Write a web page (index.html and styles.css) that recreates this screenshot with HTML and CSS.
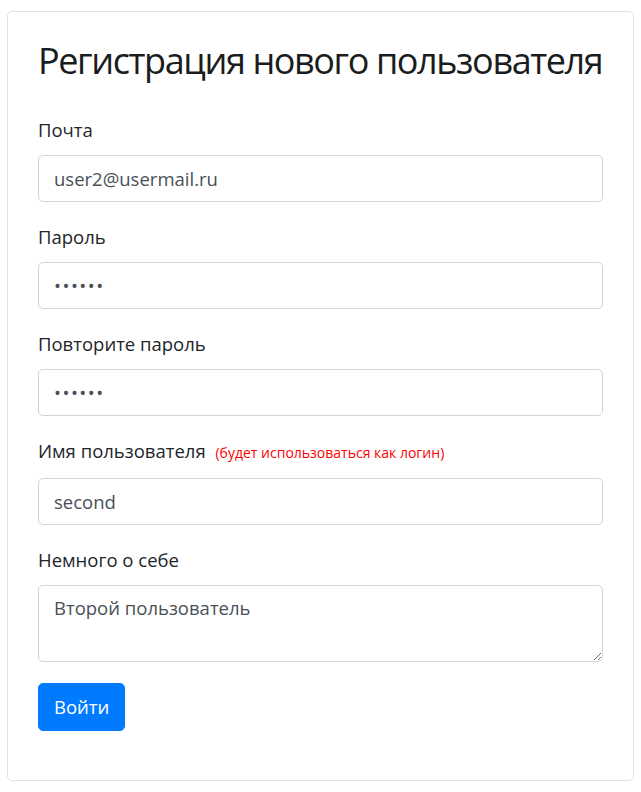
FILE: index.html
```html
<!DOCTYPE html>
<html lang="ru">
<head>
<meta charset="utf-8">
<title>Регистрация</title>
<link rel="stylesheet" href="styles.css">
</head>
<body>
<div class="card">
  <h2 class="title">Регистрация нового пользователя</h2>
  <form class="form">
    <div class="group">
      <label class="label" for="email">Почта</label>
      <input class="control" id="email" type="text" value="user2@usermail.ru">
    </div>
    <div class="group">
      <label class="label" for="pass">Пароль</label>
      <input class="control secret" id="pass" type="password" value="123456">
    </div>
    <div class="group">
      <label class="label" for="pass2">Повторите пароль</label>
      <input class="control secret" id="pass2" type="password" value="123456">
    </div>
    <div class="group">
      <label class="label" for="login">Имя пользователя <span class="hint">(будет использоваться как логин)</span></label>
      <input class="control" id="login" type="text" value="second">
    </div>
    <div class="group">
      <label class="label" for="about">Немного о себе</label>
      <textarea class="control area" id="about" rows="2">Второй пользователь</textarea>
    </div>
    <button class="btn" type="button">Войти</button>
  </form>
</div>
</body>
</html>
```
FILE: styles.css
```css
html, body {
  margin: 0;
  padding: 0;
  background: #ffffff;
}
body {
  font-family: "Open Sans", "Noto Sans", "DejaVu Sans", sans-serif;
  font-size: 18.5px;
  line-height: 1.5;
  color: #212529;
  padding: 11px 0 0 7px;
}
.card {
  box-sizing: border-box;
  width: 627px;
  height: 770px;
  border: 1px solid #dfe2e6;
  border-radius: 5px;
  padding: 25px 30px 0 30px;
}
.title {
  margin: 0 0 30px 0;
  font-size: 36px;
  font-weight: 500;
  letter-spacing: -1.4px;
  line-height: 48px;
  color: #1a1d20;
  white-space: nowrap;
}
.form {
  display: flex;
  flex-direction: column;
}
.group {
  display: flex;
  flex-direction: column;
  margin-bottom: 20px;
}
.label {
  display: block;
  margin-bottom: 10px;
  line-height: 30px;
  font-size: 18.5px;
}
.hint {
  color: #ff0000;
  font-size: 14px;
  margin-left: 5px;
}
.control {
  box-sizing: border-box;
  width: 100%;
  height: 47px;
  padding: 7px 15px;
  font-family: inherit;
  font-size: 18.5px;
  line-height: 30px;
  color: #495057;
  background: #fff;
  border: 1px solid #ced4da;
  border-radius: 5px;
  outline: none;
}
.secret {
  letter-spacing: 1.5px;
}
.area {
  height: 77px;
  resize: vertical;
}
.btn {
  align-self: flex-start;
  box-sizing: border-box;
  height: 48px;
  margin-top: 1px;
  padding: 7px 15px;
  font-family: inherit;
  font-size: 18.5px;
  line-height: 30px;
  color: #fff;
  background: #007bff;
  border: 1px solid #007bff;
  border-radius: 5px;
}
```
